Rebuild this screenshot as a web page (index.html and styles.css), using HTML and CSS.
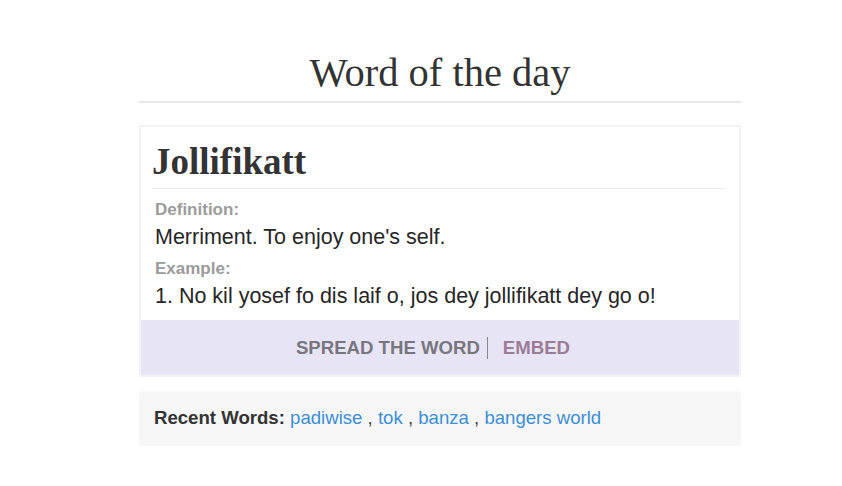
FILE: index.html
```html
<!DOCTYPE html>
<html>
<head>
<meta charset="utf-8">
<link rel="stylesheet" href="styles.css">
</head>
<body>
<main class="wrap">
  <h1 class="title">Word of the day</h1>
  <section class="card">
    <div class="card-body">
      <h2 class="word">Jollifikatt</h2>
      <div class="label first">Definition:</div>
      <div class="text">Merriment. To enjoy one's self.</div>
      <div class="label">Example:</div>
      <div class="text">1. No kil yosef fo dis laif o, jos dey jollifikatt dey go o!</div>
    </div>
    <div class="band">
      <span class="spread">SPREAD THE WORD</span><span class="sep"></span><span class="embed">EMBED</span>
    </div>
  </section>
  <section class="recent">
    <b>Recent Words:</b> <a href="#">padiwise</a> , <a href="#">tok</a> , <a href="#">banza</a> , <a href="#">bangers world</a>
  </section>
</main>
</body>
</html>
```
FILE: styles.css
```css
html, body { margin: 0; padding: 0; background: #fff; }
body { font-family: "Liberation Sans", Arial, sans-serif; color: #222; }
.wrap { width: 602px; margin: 0 0 0 139px; padding-top: 51px; }
.title {
  font-family: "Liberation Serif", "Times New Roman", serif;
  font-weight: normal; font-size: 40.5px; color: #333; text-align: center;
  margin: 0; padding-bottom: 6px; line-height: 44px;
  border-bottom: 2px solid #e8e8e8;
}
.card { margin-top: 22px; border: 2px solid #f2f2f2; }
.card-body { padding: 11px 13px 11px 12px; }
.word {
  font-family: "Liberation Serif", "Times New Roman", serif;
  font-size: 37px; font-weight: bold; color: #333; margin: 0 0 0 -1px;
  line-height: 48px; padding-bottom: 2px; border-bottom: 1px solid #ececec;
}
.label { font-size: 17px; font-weight: bold; color: #9b9b9b; margin: 9px 2px 0; line-height: 20px; }
.label.first { margin-top: 11px; }
.text { font-size: 21.5px; color: #262626; margin: 4px 2px 0; line-height: 26px; }
.band {
  background: #e7e5f5; height: 55px; display: flex; align-items: center; justify-content: center;
  padding-right: 14px;
  font-size: 18.6px; font-weight: bold;
}
.spread { color: #77767f; }
.sep { width: 1px; height: 22px; background: #888; margin: 0 15px 0 7px; }
.embed { color: #9a7c98; }
.recent {
  margin-top: 14px; background: #f7f7f7; border-radius: 3px;
  padding: 16px 14px 17px 15px; font-size: 18.6px; line-height: 22px; color: #444;
}
.recent b { color: #333; }
.recent a { color: #3d8ed6; text-decoration: none; }
```
